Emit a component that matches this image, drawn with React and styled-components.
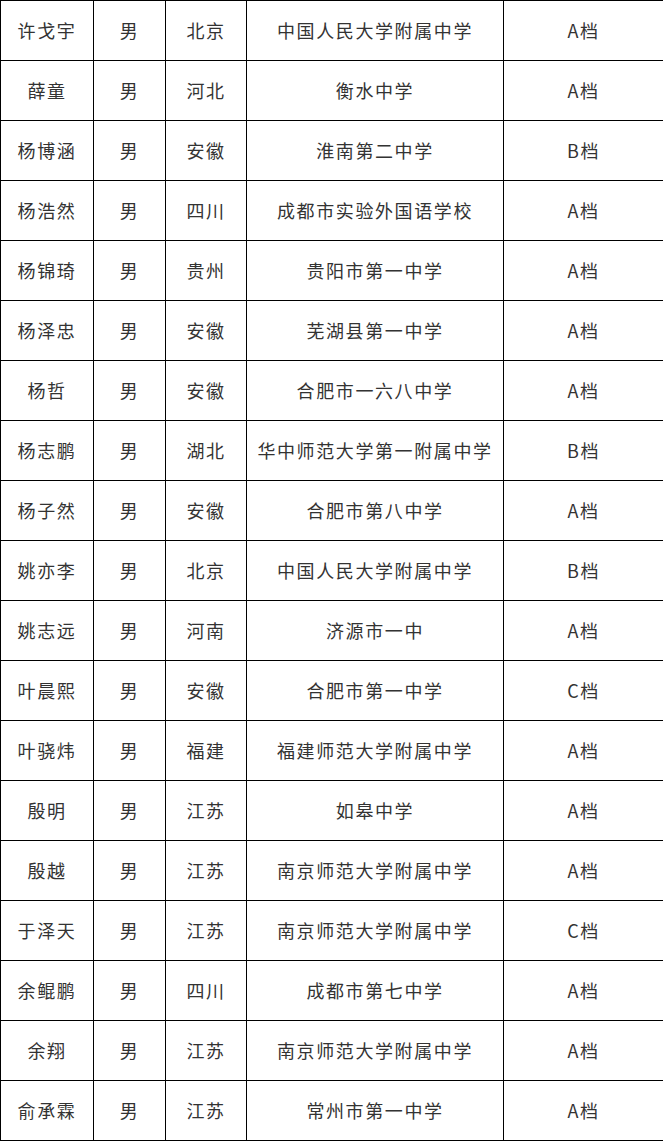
import React from 'react';
import styled, { createGlobalStyle } from 'styled-components';

const GlobalStyle = createGlobalStyle`
  html, body {
    margin: 0;
    padding: 0;
    background: #fff;
  }
  body {
    font-family: "Noto Sans CJK SC", "Noto Sans", sans-serif;
  }
`;

const Table = styled.table`
  width: 663px;
  border-collapse: collapse;
  table-layout: fixed;
`;

const Row = styled.tr`
  height: 60px;
`;

const Cell = styled.td`
  border: 1px solid #000;
  padding: 0 0 2px;
  text-align: center;
  vertical-align: middle;
  font-size: 18px;
  letter-spacing: 1.6px;
  color: #333;
  white-space: nowrap;
  overflow: hidden;
`;

const widths = [93, 72, 81, 257, 160];

const students = [
  ['许戈宇', '男', '北京', '中国人民大学附属中学', 'A档'],
  ['薛童', '男', '河北', '衡水中学', 'A档'],
  ['杨博涵', '男', '安徽', '淮南第二中学', 'B档'],
  ['杨浩然', '男', '四川', '成都市实验外国语学校', 'A档'],
  ['杨锦琦', '男', '贵州', '贵阳市第一中学', 'A档'],
  ['杨泽忠', '男', '安徽', '芜湖县第一中学', 'A档'],
  ['杨哲', '男', '安徽', '合肥市一六八中学', 'A档'],
  ['杨志鹏', '男', '湖北', '华中师范大学第一附属中学', 'B档'],
  ['杨子然', '男', '安徽', '合肥市第八中学', 'A档'],
  ['姚亦李', '男', '北京', '中国人民大学附属中学', 'B档'],
  ['姚志远', '男', '河南', '济源市一中', 'A档'],
  ['叶晨熙', '男', '安徽', '合肥市第一中学', 'C档'],
  ['叶骁炜', '男', '福建', '福建师范大学附属中学', 'A档'],
  ['殷明', '男', '江苏', '如皋中学', 'A档'],
  ['殷越', '男', '江苏', '南京师范大学附属中学', 'A档'],
  ['于泽天', '男', '江苏', '南京师范大学附属中学', 'C档'],
  ['余鲲鹏', '男', '四川', '成都市第七中学', 'A档'],
  ['余翔', '男', '江苏', '南京师范大学附属中学', 'A档'],
  ['俞承霖', '男', '江苏', '常州市第一中学', 'A档'],
];

export default function App() {
  return (
    <>
      <GlobalStyle />
      <Table>
        <colgroup>
          {widths.map((w, i) => (
            <col key={i} style={{ width: w }} />
          ))}
        </colgroup>
        <tbody>
          {students.map((s) => (
            <Row key={s[0]}>
              {s.map((v, i) => (
                <Cell key={i}>{v}</Cell>
              ))}
            </Row>
          ))}
        </tbody>
      </Table>
    </>
  );
}
